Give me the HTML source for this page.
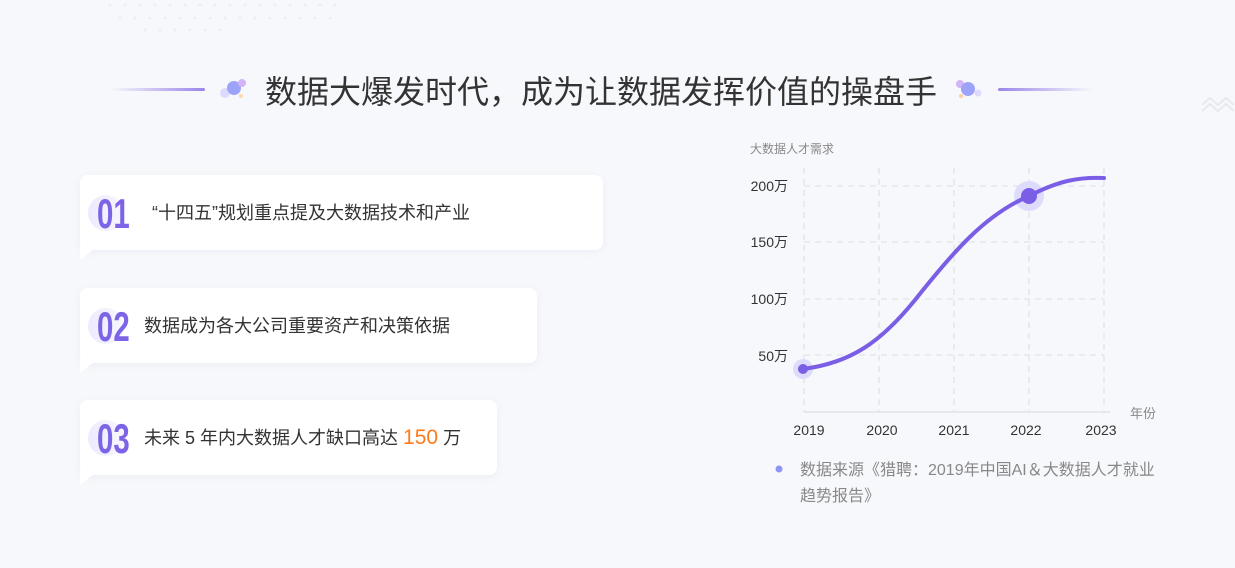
<!DOCTYPE html>
<html><head><meta charset="utf-8"><style>
*{margin:0;padding:0;box-sizing:border-box}
body{width:1235px;height:568px;overflow:hidden;background:#f7f8fb;font-family:"Liberation Sans","Noto Sans CJK SC",sans-serif;position:relative;color:#333}
.abs{position:absolute}
.title{left:265px;top:70px;font-size:32px;color:#333;white-space:nowrap;line-height:44px}
.card{position:absolute;left:80px;height:75px;background:#fff;border-radius:8px;box-shadow:0 2px 8px rgba(120,120,160,.08)}
.tail{position:absolute;left:0;bottom:-10px;width:18px;height:14px;background:#fff;clip-path:polygon(0 0,100% 0,0 100%)}
.num{position:absolute;left:8px;top:20px;width:36px;height:36px;border-radius:50%;background:linear-gradient(90deg,#ecebff,#f7f6ff)}
.num span{position:absolute;left:9px;top:-2px;line-height:1;font-size:42px;font-weight:bold;color:#7d64e6;transform:scaleX(.7);transform-origin:left;font-family:"Liberation Sans Narrow","Liberation Sans",sans-serif}
.txt{position:absolute;top:26px;font-size:18px;color:#333;white-space:nowrap;line-height:24px}
</style></head><body>
<svg class="abs" style="left:100px;top:0" width="260" height="35">
<g fill="#eceef4">
<circle cx="10" cy="5" r="1.5"/><circle cx="25" cy="5" r="1.5"/><circle cx="40" cy="5" r="1.5"/><circle cx="55" cy="5" r="1.5"/><circle cx="70" cy="5" r="1.5"/><circle cx="85" cy="5" r="1.5"/><circle cx="100" cy="5" r="1.5"/><circle cx="115" cy="5" r="1.5"/><circle cx="130" cy="5" r="1.5"/><circle cx="145" cy="5" r="1.5"/><circle cx="160" cy="5" r="1.5"/><circle cx="175" cy="5" r="1.5"/><circle cx="190" cy="5" r="1.5"/><circle cx="205" cy="5" r="1.5"/><circle cx="220" cy="5" r="1.5"/><circle cx="235" cy="5" r="1.5"/>
<circle cx="20" cy="18" r="1.5"/><circle cx="35" cy="18" r="1.5"/><circle cx="50" cy="18" r="1.5"/><circle cx="65" cy="18" r="1.5"/><circle cx="80" cy="18" r="1.5"/><circle cx="95" cy="18" r="1.5"/><circle cx="110" cy="18" r="1.5"/><circle cx="125" cy="18" r="1.5"/><circle cx="140" cy="18" r="1.5"/><circle cx="155" cy="18" r="1.5"/><circle cx="170" cy="18" r="1.5"/><circle cx="185" cy="18" r="1.5"/><circle cx="200" cy="18" r="1.5"/><circle cx="215" cy="18" r="1.5"/><circle cx="230" cy="18" r="1.5"/>
<circle cx="45" cy="30" r="1.5"/><circle cx="60" cy="30" r="1.5"/><circle cx="75" cy="30" r="1.5"/><circle cx="90" cy="30" r="1.5"/><circle cx="105" cy="30" r="1.5"/><circle cx="120" cy="30" r="1.5"/>
</g></svg>
<svg class="abs" style="left:1200px;top:93px" width="35" height="20"><path d="M2 12 L10 5 L18 12 L26 5 L34 12 M2 18 L10 11 L18 18 L26 11 L34 18" stroke="#e8e9f0" stroke-width="2" fill="none"/></svg>
<div class="abs" style="left:110px;top:88px;width:95px;height:3px;border-radius:2px;background:linear-gradient(90deg,rgba(150,130,230,0),#9a86e8)"></div>
<div class="abs" style="left:998px;top:88px;width:95px;height:3px;border-radius:2px;background:linear-gradient(90deg,#9a86e8,rgba(150,130,230,0))"></div>
<svg class="abs" style="left:218px;top:75px" width="32" height="28"><circle cx="7" cy="18" r="5" fill="#dcdafe"/><circle cx="16" cy="13" r="7" fill="#9ea3fa"/><circle cx="24" cy="8" r="4" fill="#d2b5f7"/><circle cx="23" cy="21" r="2" fill="#fcd7b0"/></svg>
<svg class="abs" style="left:952px;top:75px" width="32" height="28"><circle cx="8" cy="9" r="4" fill="#d2b5f7"/><circle cx="16" cy="14" r="7" fill="#9ea3fa"/><circle cx="26" cy="18" r="3.5" fill="#dcdafe"/><circle cx="9" cy="21" r="2" fill="#fcd0a0"/></svg>
<div class="abs title">数据大爆发时代，成为让数据发挥价值的操盘手</div>

<div class="card" style="top:175px;width:523px"><div class="tail"></div><div class="num"><span>01</span></div><div class="txt" style="left:72px">“十四五”规划重点提及大数据技术和产业</div></div>
<div class="card" style="top:288px;width:457px"><div class="tail"></div><div class="num"><span>02</span></div><div class="txt" style="left:64px">数据成为各大公司重要资产和决策依据</div></div>
<div class="card" style="top:400px;width:417px"><div class="tail"></div><div class="num"><span>03</span></div><div class="txt" style="left:64px">未来 5 年内大数据人才缺口高达 <span style="color:#ff7a1a;font-size:21px">150</span> 万</div></div>

<svg class="abs" style="left:740px;top:135px" width="495" height="380" font-family="Liberation Sans,Noto Sans CJK SC,sans-serif">
<text x="10" y="18" font-size="12" fill="#888">大数据人才需求</text>
<g stroke="#e2e3ea" stroke-width="1.3" stroke-dasharray="6 5" fill="none">
<path d="M64 51H364M64 107H364M64 164H364M64 220H364"/>
<path d="M64 33V277M139 33V277M214 33V277M289 33V277M364 33V277"/>
</g>
<path d="M64 277H370" stroke="#e2e3ea" stroke-width="1.5"/>
<g font-size="14" fill="#333" text-anchor="end">
<text x="48" y="56">200万</text><text x="48" y="112">150万</text><text x="48" y="169">100万</text><text x="48" y="226">50万</text>
</g>
<g font-size="14" fill="#333" text-anchor="middle">
<text x="69" y="300">2019</text><text x="142" y="300">2020</text><text x="214" y="300">2021</text><text x="286" y="300">2022</text><text x="361" y="300">2023</text>
</g>
<text x="390" y="283" font-size="13" fill="#888">年份</text>
<circle cx="63" cy="234" r="10" fill="#dedcfc"/>
<circle cx="289" cy="61" r="15" fill="#dedcfc"/>
<path d="M63 234 C110 228 140 208 175 165 C215 115 245 80 289 61 C320 45 340 42 364 43" stroke="#7b5ee6" stroke-width="4" fill="none" stroke-linecap="round"/>
<circle cx="63" cy="234" r="5" fill="#7b5ee6"/>
<circle cx="289" cy="61" r="8" fill="#7b5ee6"/>
<circle cx="39" cy="334" r="3.5" fill="#8f95f7"/>
<text x="60" y="340" font-size="16" fill="#888">数据来源《猎聘：2019年中国AI＆大数据人才就业</text>
<text x="60" y="366" font-size="16" fill="#888">趋势报告》</text>
</svg>
</body></html>
